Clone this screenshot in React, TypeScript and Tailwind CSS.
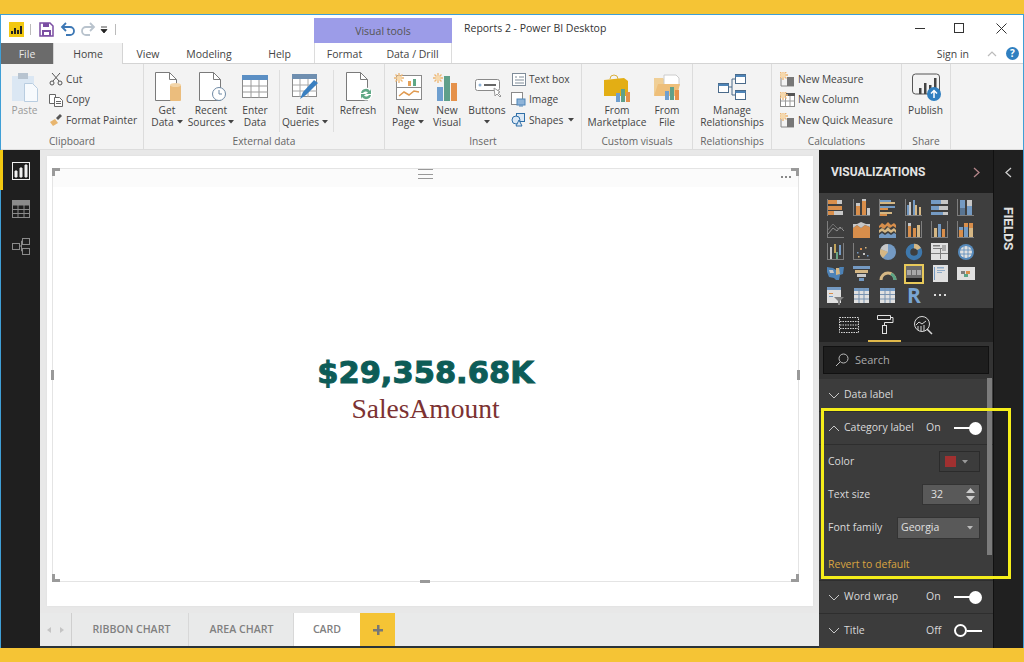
import React from "react";

const O = "#e9974d";
const B = "#7aa5d2";
const G = "#d6d6d6";
const T = "#e6c58c";
const A = "#858585";
const W = "#f2f2f2";

const r = (x: number, y: number, w: number, h: number, c: string) => <rect x={x} y={y} width={w} height={h} fill={c} />;

const Caret = ({ className = "fill-[#444]" }: { className?: string }) => (
  <svg width="6" height="4" viewBox="0 0 6 4" className={`inline-block ${className}`}><path d="M0 0h6L3 3.500z" /></svg>
);

const Axes = () => (
  <>
    {r(0, 0, 1, 17, A)}
    {r(0, 16, 17, 1, A)}
  </>
);

const tableIcon = (c: string) => (
  <>
    {r(1, 1, 15, 15, W)}
    {r(1, 1, 15, 3, B)}
    {r(5.500, 1, 1, 15, c)}
    {r(10.500, 1, 1, 15, c)}
    {r(1, 7, 15, 1, c)}
    {r(1, 11.500, 15, 1, c)}
  </>
);

const vizIcons = [
  <>{r(0, 0, 1, 17, A)}{r(1, 1, 9, 4, O)}{r(10, 1, 5, 4, G)}{r(1, 7, 14, 4, O)}{r(1, 12, 6, 4, O)}{r(7, 12, 9, 4, G)}</>,
  <><Axes />{r(3, 7, 4, 9, O)}{r(3, 4, 4, 3, G)}{r(9, 2, 4, 14, O)}{r(9, 0, 4, 2, G)}{r(14, 9, 3, 7, G)}</>,
  <>{r(0, 0, 1, 17, A)}{r(1, 1, 11, 2, B)}{r(1, 3, 15, 2, T)}{r(1, 7, 15, 2, B)}{r(1, 9, 8, 2, O)}{r(1, 13, 12, 2, T)}{r(1, 15, 7, 2, O)}</>,
  <><Axes />{r(2, 6, 2, 10, B)}{r(4, 3, 2, 13, G)}{r(8, 1, 2, 15, B)}{r(10, 6, 2, 10, T)}{r(14, 8, 2, 8, T)}</>,
  <>{r(0, 1, 17, 4, B)}{r(10, 1, 7, 4, G)}{r(0, 7, 17, 4, G)}{r(0, 7, 8, 4, B)}{r(0, 13, 17, 3, B)}{r(12, 13, 5, 3, G)}</>,
  <>{r(0, 0, 1, 17, A)}{r(3, 1, 5, 15, B)}{r(3, 9, 5, 7, "#5b7a9c")}{r(10, 1, 5, 15, G)}{r(10, 7, 5, 9, B)}{r(1, 16, 16, 1, A)}</>,
  <><Axes /><path d="M1 13l5-6 4 3 3-4 4 4" stroke="#9a9a9a" fill="none" /><path d="M1 9l5-6 5 5 5-1" stroke="#767676" fill="none" /></>,
  <><path d="M0 7l4-3 4 3 4-3 5 2v11H0z" fill={O} /><path d="M0 3l4 0 4-2 5 2 4 0v3l-5-2-4 3-4-3-4 3z" fill={G} /></>,
  <><path d="M0 5l3-3 3 2 3-3 3 3 3-2 2 2v3l-3-2-3 2-3-2-3 3-3-2-2 1z" fill={O} /><path d="M0 9l3-2 3 2 3-3 3 3 3-2 2 2v3l-2-2-3 2-3-2-3 2-3-2-3 2z" fill={T} /><path d="M0 14l3-2 3 2 3-2 3 2 3-2 2 1v4H0z" fill={B} /></>,
  <><Axes />{r(3, 5, 3, 11, O)}{r(3, 2, 3, 3, G)}{r(8, 7, 3, 9, O)}{r(12, 4, 3, 12, T)}{r(16, 0, 1, 17, A)}</>,
  <><Axes />{r(3, 7, 3, 9, T)}{r(7, 3, 3, 13, B)}{r(11, 8, 3, 8, O)}{r(16, 0, 1, 17, A)}</>,
  <><Axes />{r(2, 9, 4, 7, O)}{r(2, 6, 4, 3, B)}{r(7, 5, 4, 11, B)}{r(7, 2, 4, 4, O)}{r(12, 2, 4, 5, O)}{r(12, 7, 4, 9, T)}</>,
  <><Axes />{r(16, 0, 1, 17, A)}{r(3, 4, 2, 12, G)}{r(7, 1, 2, 9, "#d1b15f")}{r(9, 9, 2, 7, "#6fb08b")}{r(12, 2, 2, 10, B)}</>,
  <><Axes />{r(4, 9, 1.500, 1.500, B)}{r(7, 5, 2, 2, O)}{r(10, 10, 2, 2, G)}{r(12, 4, 1.500, 1.500, T)}{r(14, 12, 1.500, 1.500, B)}{r(5, 13, 1.500, 1.500, T)}</>,
  <><circle cx="9" cy="9" r="8" fill={B} /><path d="M9 9L9 1A8 8 0 0 0 1.500 6z" fill={G} /><path d="M9 9L1.500 6A8 8 0 0 0 4 15z" fill={T} /></>,
  <><circle cx="9" cy="9" r="6" fill="none" stroke="#3f7fb8" strokeWidth="4.500" /><path d="M9 3a6 6 0 0 1 5 3" fill="none" stroke={T} strokeWidth="4.500" /></>,
  <>{r(0, 0, 17, 17, W)}{r(2, 2, 7, 1.500, A)}{r(2, 5, 13, 1, A)}{r(9, 5, 1, 11, A)}{r(0, 10, 17, 1, A)}{r(11, 2, 4, 6, "#b8b8b8")}</>,
  <><circle cx="9" cy="9" r="8" fill="#5a93c9" /><circle cx="9" cy="9" r="6" fill={W} /><path d="M3 7h12M3 11h12M7 3v12M11 3v12" stroke="#5a93c9" strokeWidth="0.800" /></>,
  <><path d="M0 2l6 1 3 2 4-3 4 0-1 7-3 1-1 5-3 0-2-2-5-1-2-5z" fill="#4f8ac4" /><path d="M9 3l3 0 1 6-4 1z" fill={T} /><path d="M2 5l4 0 1 3-4 0z" fill={G} /></>,
  <>{r(0, 1, 17, 3, B)}{r(2, 5, 13, 3, T)}{r(4, 9, 9, 3, G)}{r(6, 13, 5, 3, B)}</>,
  <><path d="M2 15a7 7 0 0 1 14 0" fill="none" stroke={T} strokeWidth="3" /><path d="M12 9a7 7 0 0 1 4 6" fill="none" stroke="#5fb08e" strokeWidth="3" /></>,
  <></>,
  <>{r(2, 0, 15, 17, W)}{r(3, 2, 1, 13, B)}{r(6, 2, 7, 1.500, "#99b8d8")}{r(6, 5, 8, 1, "#99b8d8")}{r(6, 7, 5, 1, "#99b8d8")}</>,
  <>{r(0, 2, 18, 13, W)}{r(4, 6, 4, 3, A)}{r(9, 6, 4, 3, O)}{r(7, 9, 4, 3, "#5fb08e")}</>,
  <>{r(0, 0, 14, 16, W)}{r(0, 0, 14, 3, B)}{r(2, 6, 4, 1, O)}{r(2, 9, 4, 1, B)}<path d="M7 10h10l-4 4v4h-2v-4z" fill="#8a8a8a" /></>,
  tableIcon("#7f9cbc"),
  tableIcon("#7f9cbc"),
];

const VizGrid = () => (
  <div className="grid grid-cols-[repeat(6,26px)] auto-rows-[22px] pl-[4px] pt-[4px] h-[115px] bg-[#3e3e3e]">
    {vizIcons.map((icon, i) =>
      i === 21 ? (
        <div key={i} className="flex items-center justify-center">
          <div className="w-[20px] h-[20px] border-2 border-[#e8c95a] bg-[#6a6a6a] flex flex-col">
            <div className="flex-1 flex items-center justify-center gap-[1px]">
              <div className="w-[4px] h-[5px] bg-[#a8a8a8]" />
              <div className="w-[4px] h-[5px] bg-[#a8a8a8]" />
              <div className="w-[4px] h-[5px] bg-[#a8a8a8]" />
            </div>
            <div className="h-[4px] bg-[#222]" />
          </div>
        </div>
      ) : (
        <div key={i} className="flex items-center justify-center opacity-90">
          <svg width="18" height="18" viewBox="0 0 18 18">{icon}</svg>
        </div>
      )
    )}
    <div className="flex items-center justify-center text-[21px] font-bold text-[#7aa5d2] font-['Open_Sans',sans-serif]">R</div>
    <div className="flex items-center justify-center gap-[3px] pb-[3px]">
      <div className="w-[2px] h-[2px] bg-[#ddd]" />
      <div className="w-[2px] h-[2px] bg-[#ddd]" />
      <div className="w-[2px] h-[2px] bg-[#ddd]" />
    </div>
  </div>
);

const DocIcon = ({ children }: { children?: React.ReactNode }) => (
  <svg width="36" height="34" viewBox="0 0 36 34">
    <path d="M6.500 2.500h14l7 7v21h-21z" fill="#fff" stroke="#7a7a7a" />
    <path d="M20.500 2.500v7h7" fill="none" stroke="#7a7a7a" />
    {children}
  </svg>
);

const Sun = ({ x = 0, y = 0 }: { x?: number; y?: number }) => (
  <g transform={`translate(${x} ${y})`}>
    <path d="M5 0v10M0 5h10M1.500 1.500l7 7M8.500 1.500l-7 7" stroke="#edb572" strokeWidth="1.300" />
    <circle cx="5" cy="5" r="2.500" fill="#f6d9ad" />
  </g>
);

const BigBtn = ({ w, icon, lines, caret, className = "text-[#444]" }: { w: number; icon: React.ReactNode; lines: string[]; caret?: boolean; className?: string }) => (
  <div className={`flex flex-col items-center shrink-0 ${className}`} style={{ width: w }}>
    <div className="h-[34px] flex items-center justify-center">{icon}</div>
    {lines.map((l, i) => (
      <div key={i} className="h-[12px] leading-[12px] whitespace-nowrap flex items-center gap-[3px]">
        {l}
        {caret && i === lines.length - 1 ? <Caret /> : null}
      </div>
    ))}
  </div>
);

const SmallBtn = ({ icon, label, caret }: { icon: React.ReactNode; label: string; caret?: boolean }) => (
  <div className="h-[20.500px] flex items-center gap-[3px] whitespace-nowrap text-[#444]">
    <div className="w-[15px] h-[16px] flex items-center justify-center shrink-0">{icon}</div>
    {label}
    {caret ? <Caret className="fill-[#444] ml-[2px]" /> : null}
  </div>
);

const Group = ({ w, label, children }: { w: number; label: string; children: React.ReactNode }) => (
  <div className="flex flex-col h-[85px] border-r border-[#dcdcdc] shrink-0" style={{ width: w }}>
    <div className="h-[69px] pt-[6px] flex">{children}</div>
    <div className="flex-1 flex items-center justify-center text-[#666] leading-none">{label}</div>
  </div>
);

const VSep = () => <div className="w-px h-[62px] bg-[#dedede] shrink-0" />;

const Ribbon = () => (
  <div className="flex h-[85px] bg-[#f3f3f3] text-[10.200px] font-['Open_Sans',sans-serif]">
    <Group w={143} label="Clipboard">
      <div className="w-[47px] text-[#9a9a9a] shrink-0 flex flex-col items-center">
        <div className="h-[34px] flex items-center">
          <svg width="28" height="32" viewBox="0 0 28 32">
            <rect x="1" y="5" width="22" height="25" fill="#dbe7f3" />
            <rect x="7" y="2" width="10" height="6" fill="#b8c4d0" />
            <path d="M13.500 12.500h8l5 5v13h-13z" fill="#f7fafd" stroke="#b9cde0" />
          </svg>
        </div>
        <div className="leading-[12px]">Paste</div>
      </div>
      <div className="flex flex-col -mt-[1px]">
        <SmallBtn label="Cut" icon={<svg width="14" height="14" viewBox="0 0 14 14" fill="none" stroke="#555"><path d="M3 1l7 8M11 1L4 9" /><circle cx="3" cy="11" r="2" /><circle cx="11" cy="11" r="2" /></svg>} />
        <SmallBtn label="Copy" icon={<svg width="14" height="14" viewBox="0 0 14 14" fill="#fff" stroke="#666"><path d="M.500 1.500h6v9h-6z" /><path d="M5.500 4.500h5l3 3v6h-8z" /><path d="M7 8.500h5M7 10.500h5" /></svg>} />
        <SmallBtn label="Format Painter" icon={<svg width="14" height="14" viewBox="0 0 14 14"><path d="M1 9l5-3 3 4-5 3z" fill="#e8b56e" /><path d="M7 5l4-4 2 2-4 4z" fill="#555" /></svg>} />
      </div>
    </Group>
    <Group w={241} label="External data">
      <div className="w-px" />
      <BigBtn w={44} lines={["Get", "Data"]} caret icon={<DocIcon><rect x="21" y="15" width="11" height="16" rx="1" fill="#ebbd7d" /><ellipse cx="26.500" cy="15" rx="5.500" ry="2" fill="#f3d5a8" /></DocIcon>} />
      <BigBtn w={44} lines={["Recent", "Sources"]} caret icon={<DocIcon><circle cx="26" cy="24" r="6.500" fill="#fff" stroke="#6f8aa5" /><path d="M26 20v4h3" fill="none" stroke="#6f8aa5" /></DocIcon>} />
      <BigBtn w={44} lines={["Enter", "Data"]} icon={
        <svg width="28" height="26" viewBox="0 0 28 26"><rect x="1.500" y="1.500" width="25" height="22" fill="#fff" stroke="#8a8a8a" /><rect x="1" y="1" width="26" height="5" fill="#5b8fc4" /><path d="M10 6v18M18 6v18M2 12h25M2 18h25" stroke="#9a9a9a" /></svg>
      } />
      <div className="pl-[2px] flex"><VSep /></div>
      <BigBtn w={50} lines={["Edit", "Queries"]} caret icon={
        <svg width="30" height="30" viewBox="0 0 30 30"><rect x="2.500" y="2.500" width="24" height="22" fill="#fff" stroke="#8a8a8a" /><rect x="2" y="2" width="25" height="5" fill="#6f8fb0" /><path d="M10 7v18M18 7v18M3 13h24M3 19h24" stroke="#a8a8a8" /><path d="M10 27l3-7 11-12 4 3-12 12z" fill="#3a7fc0" /></svg>
      } />
      <div className="pl-[3px] flex"><VSep /></div>
      <BigBtn w={48} lines={["Refresh"]} icon={
        <DocIcon><circle cx="26" cy="24" r="6.500" fill="#fff" /><path d="M21 23a5 5 0 0 1 9-2l1-2v5h-5l2-1.500a3 3 0 0 0-5 .5zM31 25a5 5 0 0 1-9 2l-1 2v-5h5l-2 1.500a3 3 0 0 0 5-.5z" fill="#5fa886" /></DocIcon>
      } />
    </Group>
    <Group w={197} label="Insert">
      <div className="w-[3px]" />
      <BigBtn w={40} lines={["New", "Page"]} caret icon={
        <svg width="30" height="30" viewBox="0 0 30 30"><rect x="3.500" y="3.500" width="25" height="24" fill="#fff" stroke="#8a8a8a" /><path d="M4 15.500h24" stroke="#8a8a8a" /><rect x="15" y="9" width="3" height="5" fill="#e5a15a" /><rect x="20" y="7" width="3" height="7" fill="#5fa886" /><path d="M6 24l5-4 5 3 5-4 5 1" stroke="#e09a50" strokeWidth="1.500" fill="none" /><Sun x={1} y={1} /></svg>
      } />
      <BigBtn w={38} lines={["New", "Visual"]} icon={
        <svg width="28" height="30" viewBox="0 0 28 30"><rect x="4" y="15" width="6" height="14" fill="#6f9fcf" /><rect x="11" y="4" width="6" height="25" fill="#5fa08a" /><rect x="18" y="11" width="6" height="18" fill="#e5914a" /><Sun x={0} y={1} /></svg>
      } />
      <BigBtn w={42} lines={["Buttons", ""]} caret icon={
        <svg width="30" height="26" viewBox="0 0 30 26"><rect x="3.500" y="5.500" width="24" height="11" rx="2" fill="#fff" stroke="#8a8a8a" /><circle cx="8" cy="11" r="1.500" fill="#8fb4d8" /><path d="M12 11h12" stroke="#666" strokeWidth="2" /><path d="M22 14l1 8 2-2 3 3 1-1-3-3 2-1z" fill="#fff" stroke="#999" /></svg>
      } />
      <div className="flex flex-col ml-[3px] -mt-[1px]">
        <SmallBtn label="Text box" icon={<svg width="14" height="13" viewBox="0 0 14 13" fill="#fff" stroke="#7f8c99"><rect x=".500" y=".500" width="13" height="12" /><path d="M3 4h2M7 4h5M3 7h9M3 10h9" /></svg>} />
        <SmallBtn label="Image" icon={<svg width="15" height="15" viewBox="0 0 15 15"><rect x=".500" y=".500" width="11" height="12" fill="#fff" stroke="#8a8a8a" /><rect x="6" y="7" width="8" height="6" fill="#8fb4d8" stroke="#4f85b8" /><path d="M8 14h4" stroke="#4f85b8" /></svg>} />
        <SmallBtn label="Shapes" caret icon={<svg width="15" height="14" viewBox="0 0 15 14" fill="#dbe8f5" stroke="#2f6fa8"><rect x="5.500" y=".500" width="8" height="8" /><circle cx="5" cy="7" r="4" /><path d="M8 7l3 6H5z" /></svg>} />
      </div>
    </Group>
    <Group w={111} label="Custom visuals">
      <div className="w-[5px]" />
      <BigBtn w={60} lines={["From", "Marketplace"]} icon={
        <svg width="32" height="32" viewBox="0 0 32 32"><path d="M9 8a4 4 0 0 1 8 0" fill="none" stroke="#d9b040" /><path d="M3 9l20-2 4 3v15H3z" fill="#e3ae14" /><rect x="15" y="22" width="4" height="9" fill="#6f9fcf" /><rect x="20" y="18" width="4" height="13" fill="#5fa08a" /><rect x="25" y="21" width="4" height="10" fill="#e5914a" /></svg>
      } />
      <BigBtn w={40} lines={["From", "File"]} icon={
        <svg width="30" height="30" viewBox="0 0 30 30"><path d="M2 6h9l3 3h12v14H2z" fill="#f0cf96" /><path d="M12 3h12l3 3v8H12z" fill="#fff" stroke="#ccc" /><path d="M2 24l4-12h22l-3 12z" fill="#eebf7a" /><rect x="13" y="19" width="4" height="9" fill="#6f9fcf" /><rect x="18" y="15" width="4" height="13" fill="#5fa08a" /><rect x="23" y="18" width="4" height="10" fill="#e5914a" /></svg>
      } />
    </Group>
    <Group w={79} label="Relationships">
      <BigBtn w={78} lines={["Manage", "Relationships"]} icon={
        <svg width="30" height="30" viewBox="0 0 30 30" fill="#fff" stroke="#4a6a8a"><path d="M10 15h5M15 7v16M15 7h3M15 23h3" /><rect x="1.500" y="11.500" width="10" height="9" /><rect x="18.500" y="2.500" width="10" height="9" /><rect x="18.500" y="18.500" width="10" height="9" /><path d="M1.500 13h10M18.500 4h10M18.500 20h10" stroke="#4f85b8" strokeWidth="2" /></svg>
      } />
    </Group>
    <Group w={130} label="Calculations">
      <div className="flex flex-col pl-[8px] -mt-[1px]">
        <SmallBtn label="New Measure" icon={<svg width="15" height="15" viewBox="0 0 15 15"><path d="M1 6v8h13" fill="none" stroke="#888" /><rect x="7" y="5" width="7" height="9" fill="#777" /><Sun x={-2} y={-2} /></svg>} />
        <SmallBtn label="New Column" icon={<svg width="15" height="15" viewBox="0 0 15 15"><rect x=".500" y="3.500" width="14" height="11" fill="#fff" stroke="#888" /><rect x="6" y="1" width="9" height="3" fill="#555" /><path d="M5.500 4v10M10 4v10M1 9h13" stroke="#999" /><Sun x={-2} y={-2} /></svg>} />
        <SmallBtn label="New Quick Measure" icon={<svg width="15" height="15" viewBox="0 0 15 15"><path d="M1 6v8h13" fill="none" stroke="#888" /><rect x="7" y="5" width="7" height="9" fill="#777" /><Sun x={-2} y={-2} /></svg>} />
      </div>
    </Group>
    <Group w={49} label="Share">
      <BigBtn w={47} lines={["Publish"]} icon={
        <svg width="32" height="30" viewBox="0 0 32 30"><rect x="2.500" y="2" width="27" height="20" rx="3" fill="none" stroke="#555" /><rect x="9" y="16" width="2.500" height="6" fill="#444" /><rect x="14" y="11" width="2.500" height="11" fill="#444" /><rect x="19" y="13" width="2.500" height="9" fill="#444" /><rect x="24" y="6" width="2.500" height="16" fill="#444" /><circle cx="24" cy="22" r="7" fill="#2f7fc0" /><path d="M24 26v-7M21 21.500l3-3 3 3" stroke="#fff" strokeWidth="1.500" fill="none" /></svg>
      } />
    </Group>
  </div>
);

const TitleBar = () => (
  <div className="flex h-[28px] bg-white pt-[3px] font-['Open_Sans',sans-serif] text-[10.500px] text-[#444]">
    <div className="w-[313px] flex items-center shrink-0 pb-[3px]">
      <div className="w-[15px] h-[15px] ml-[8px] bg-[#f2c811] flex items-end justify-center gap-[1px] pb-[3px]">
        <div className="w-[2px] h-[3px] bg-[#222]" />
        <div className="w-[2px] h-[6px] bg-[#222]" />
        <div className="w-[2px] h-[4px] bg-[#222]" />
        <div className="w-[2px] h-[8px] bg-[#222]" />
      </div>
      <div className="w-px h-[11px] bg-[#bbb] ml-[6px]" />
      <svg width="15" height="15" viewBox="0 0 15 15" className="ml-[8px]"><path d="M1 1h10l3 3v10H1z" fill="none" stroke="#7b4ea3" strokeWidth="1.500" /><path d="M4 1h6v4H4zM3 8h9v6H3z" fill="#7b4ea3" /><rect x="5" y="10" width="5" height="3" fill="#fff" /></svg>
      <svg width="16" height="14" viewBox="0 0 16 14" className="ml-[6px]" fill="none" stroke="#3d78b5" strokeWidth="1.800"><path d="M2 5h8a4 4 0 0 1 0 8H6" /><path d="M6 1L2 5l4 4" /></svg>
      <svg width="16" height="14" viewBox="0 0 16 14" className="ml-[4px]" fill="none" stroke="#b9c3cd" strokeWidth="1.800"><path d="M14 5H6a4 4 0 0 0 0 8h4" /><path d="M10 1l4 4-4 4" /></svg>
      <svg width="8" height="8" viewBox="0 0 8 8" className="ml-[4px] mt-[2px]"><path d="M1 1h6M1 3.500h6L4 7z" stroke="#222" fill="#222" strokeWidth="0.800" /></svg>
      <div className="w-px h-[11px] bg-[#bbb] ml-[7px]" />
    </div>
    <div className="w-[138px] h-[25px] shrink-0 bg-[#9c9ce8] flex items-center justify-center text-[#555] pt-[2px]">Visual tools</div>
    <div className="pl-[12px] pt-[3px] text-[#333]">Reports 2 - Power BI Desktop</div>
    <div className="ml-auto flex h-[20px] items-center text-[#333]">
      <div className="w-[41px] flex justify-center"><div className="w-[10px] h-px bg-[#333]" /></div>
      <div className="w-[42px] flex justify-center pr-[4px]"><div className="w-[10px] h-[10px] border border-[#333]" /></div>
      <div className="w-[41px] flex justify-center pr-[2px]">
        <svg width="11" height="11" viewBox="0 0 11 11" stroke="#333"><path d="M.500.500l10 10M10.500.500l-10 10" /></svg>
      </div>
    </div>
  </div>
);

const TabRow = () => (
  <div className="flex h-[21px] bg-white border-b border-[#d4d4d4] font-['Open_Sans',sans-serif] text-[10.500px] text-[#444] leading-[22px] text-center">
    <div className="w-[52px] h-[21px] bg-[#6b6b6b] text-[#e8e8e8]">File</div>
    <div className="w-[70px] h-[21px] bg-[#f3f3f3] border-x border-[#d4d4d4] relative z-10">Home</div>
    <div className="w-[50px]">View</div>
    <div className="w-[72px]">Modeling</div>
    <div className="w-[69px]">Help</div>
    <div className="w-[60px] border-l border-[#dcdcdc]">Format</div>
    <div className="w-[78px] border-r border-[#dcdcdc]">Data / Drill</div>
    <div className="ml-auto flex items-center pr-[4px] pt-[1px]">
      <span>Sign in</span>
      <svg width="10" height="6" viewBox="0 0 10 6" fill="none" stroke="#bbb" strokeWidth="1.200" className="ml-[18px]"><path d="M1 5l4-4 4 4" /></svg>
      <div className="w-[13px] h-[13px] rounded-full bg-[#2f7fc0] text-white text-[10px] font-bold leading-[13px] ml-[9px]">?</div>
    </div>
  </div>
);

const Corner = ({ className }: { className: string }) => <div className={`absolute w-[8px] h-[8px] border-[#9a9a9a] ${className}`} />;

const Canvas = () => (
  <div className="w-[779px] shrink-0 flex flex-col bg-[#e8e8e8]">
    <div className="flex-1 pt-[6px] pl-[7px] pr-[6px] pb-[7px]">
      <div className="relative h-full bg-white pt-[12px] pl-[5px] pr-[14px] pb-[24px] shadow-[0_0_2px_#ddd]">
        <div className="relative h-full border border-[#e4e4e4] flex flex-col items-center justify-center pt-[29px]">
          <div className="absolute inset-x-0 top-0 h-[18px] bg-[#fbfbfb]" />
          <Corner className="-top-px -left-px border-t-[3px] border-l-[3px]" />
          <Corner className="-top-px -right-px border-t-[3px] border-r-[3px]" />
          <Corner className="-bottom-px -left-px border-b-[3px] border-l-[3px]" />
          <Corner className="-bottom-px -right-px border-b-[3px] border-r-[3px]" />
          <div className="absolute top-0 left-[365px] w-[15px] h-[10px] border-y border-[#999] flex items-center"><div className="w-full h-px bg-[#999]" /></div>
          <div className="absolute top-[7px] right-[7px] flex gap-[2px]">
            <div className="w-[2px] h-[2px] bg-[#888]" />
            <div className="w-[2px] h-[2px] bg-[#888]" />
            <div className="w-[2px] h-[2px] bg-[#888]" />
          </div>
          <div className="absolute -left-[2px] top-[201px] w-[3px] h-[10px] bg-[#999]" />
          <div className="absolute -right-[2px] top-[201px] w-[3px] h-[10px] bg-[#999]" />
          <div className="absolute -bottom-[2px] left-[367px] w-[10px] h-[3px] bg-[#999]" />
          <div className="font-['DejaVu_Sans',sans-serif] font-bold text-[30.500px] leading-[38px] text-[#0d5c57] [-webkit-text-stroke:1px_#0d5c57]">$29,358.68K</div>
          <div className="font-['Liberation_Serif',serif] text-[27.500px] leading-[33px] text-[#7c3232]">SalesAmount</div>
        </div>
      </div>
    </div>
    <div className="h-[33px] flex bg-[#e9eaea] font-['Open_Sans',sans-serif] text-[10.600px] font-semibold text-[#808080] leading-[32px] text-center">
      <div className="w-[32px] border-r border-[#cfcfcf] flex items-center justify-center gap-[9px]">
        <svg width="4" height="6" viewBox="0 0 4 6" fill="#c4c4c4"><path d="M4 0v6L0 3z" /></svg>
        <svg width="4" height="6" viewBox="0 0 4 6" fill="#c4c4c4"><path d="M0 0v6l4-3z" /></svg>
      </div>
      <div className="w-[117px] border-r border-[#d8d8d8] pl-[3px]">RIBBON CHART</div>
      <div className="w-[105px] border-r border-[#d8d8d8] pl-[1px]">AREA CHART</div>
      <div className="w-[66px] bg-white">CARD</div>
      <div className="w-[35px] bg-[#f5c435] flex items-center justify-center">
        <svg width="10" height="10" viewBox="0 0 10 10" fill="#777"><path d="M4 0h2.500v4H10v2.500H6.500V10H4V6.500H0V4h4z" /></svg>
      </div>
    </div>
    <div className="h-[2px] bg-[#2a3338]" />
  </div>
);

const Chevron = ({ up }: { up?: boolean }) => (
  <svg width="12" height="7" viewBox="0 0 12 7" fill="none" stroke="#c8c8c8" className="shrink-0">
    <path d={up ? "M1 6l5-5 5 5" : "M1 1l5 5 5-5"} />
  </svg>
);

const Toggle = ({ on }: { on: boolean }) =>
  on ? (
    <div className="w-[29px] flex items-center">
      <div className="w-[16px] h-[2px] bg-white" />
      <div className="w-[13px] h-[13px] rounded-full bg-white -ml-[1px]" />
    </div>
  ) : (
    <div className="w-[29px] flex items-center">
      <div className="w-[13px] h-[13px] rounded-full border-2 border-white" />
      <div className="w-[15px] h-[2px] bg-white" />
    </div>
  );

const Section = ({ label, state, up, h, sep = true }: { label: string; state?: boolean; up?: boolean; h: string; sep?: boolean }) => (
  <div className={`flex items-center pl-[9px] ${h} ${sep ? "border-b border-[#2e2e2e]" : ""}`}>
    <Chevron up={up} />
    <span className="ml-[4px] w-[82px] whitespace-nowrap">{label}</span>
    {state !== undefined ? (
      <>
        <span className="w-[28px]">{state ? "On" : "Off"}</span>
        <Toggle on={state} />
      </>
    ) : null}
  </div>
);

const Fieldrow = ({ label, children }: { label: string; children: React.ReactNode }) => (
  <div className="h-[33px] flex items-center pl-[9px] pr-[13px] justify-between">
    <span>{label}</span>
    {children}
  </div>
);

const VizPanel = () => (
  <div className="w-[174px] shrink-0 relative flex flex-col bg-[#1f1f1f] font-['Open_Sans',sans-serif] text-[10.500px] text-[#d9d9d9]">
    <div className="h-[43px] flex items-center justify-between pl-[12px] pr-[13px] pt-[1px] shrink-0">
      <span className="text-[12px] text-[#e4e4e4] font-['Roboto',sans-serif] font-bold">VISUALIZATIONS</span>
      <svg width="7" height="11" viewBox="0 0 7 11" fill="none" stroke="#b5868a" strokeWidth="1.300"><path d="M1 1l5 4.500L1 10" /></svg>
    </div>
    <VizGrid />
    <div className="h-[34px] flex items-start pl-[16px] bg-[#232323] shrink-0">
      <div className="w-[33px] h-[34px] flex items-center justify-center pr-[6px]">
        <svg width="20" height="16" viewBox="0 0 20 16" fill="none" stroke="#d8d8d8" strokeDasharray="1.500 1"><rect x=".500" y=".500" width="19" height="15" /><path d="M1 4.500h18M1 8h18M1 11.500h18" /></svg>
      </div>
      <div className="w-[33px] h-[34px] border-b-2 border-[#e0b84a] flex items-center justify-center">
        <svg width="18" height="20" viewBox="0 0 18 20" fill="none" stroke="#e0e0e0"><path d="M1.500 1.500h13v4h-13zM14.500 3.500h2.500v5H8.500v3" /><rect x="6.500" y="11.500" width="4" height="8" /></svg>
      </div>
      <div className="w-[44px] h-[34px] flex items-center justify-center">
        <svg width="20" height="20" viewBox="0 0 20 20" fill="none" stroke="#d8d8d8"><circle cx="9" cy="9" r="7.500" /><path d="M14 14l5 5" strokeWidth="1.500" /><path d="M3 10l3-3 3 2 4-3M5 11v4M8 11v5M11 10v6" /></svg>
      </div>
    </div>
    <div className="h-[37px] bg-[#333] px-[4px] pt-[4px] shrink-0">
      <div className="h-[28px] bg-[#1e1e1e] border border-[#111] flex items-center pl-[11px] text-[#aaa] text-[11px]">
        <svg width="14" height="14" viewBox="0 0 14 14" fill="none" stroke="#bbb" className="mr-[6px]"><circle cx="8.500" cy="5.500" r="4.500" /><path d="M5 9l-4 4" /></svg>
        Search
      </div>
    </div>
    <div className="flex-1 bg-[#3c3c3c]">
      <Section label="Data label" h="h-[33px]" />
      <Section label="Category label" state up h="h-[33px]" />
      <Fieldrow label="Color">
        <div className="w-[41px] h-[21px] border border-[#2b2b2b] flex items-center pl-[5px] gap-[6px]">
          <div className="w-[11px] h-[11px] bg-[#a03030]" />
          <Caret className="fill-[#999]" />
        </div>
      </Fieldrow>
      <Fieldrow label="Text size">
        <div className="w-[58px] h-[21px] bg-[#595959] border border-[#333] flex items-center pl-[8px] justify-between pr-[4px] text-[#e0e0e0]">
          32
          <svg width="9" height="13" viewBox="0 0 9 13" fill="#ccc"><path d="M4.500 0L9 5H0zM0 8h9l-4.500 5z" /></svg>
        </div>
      </Fieldrow>
      <Fieldrow label="Font family">
        <div className="w-[83px] h-[22px] bg-[#595959] border border-[#333] flex items-center pl-[3px] justify-between pr-[6px] text-[#e0e0e0]">
          Georgia
          <Caret className="fill-[#bbb]" />
        </div>
      </Fieldrow>
      <div className="h-[37px] pl-[9px] flex items-center pt-[5px] border-b border-[#2e2e2e] text-[#d9a441]">Revert to default</div>
      <Section label="Word wrap" state h="h-[33px]" />
      <Section label="Title" state={false} h="h-[33px]" sep={false} />
    </div>
    <div className="absolute left-[168px] top-[228px] w-[5px] h-[177px] bg-[#7c7c7c]" />
  </div>
);

const App = () => (
  <div className="relative w-[1024px] h-[662px] overflow-hidden bg-[#f5c435]">
    <div className="h-[14px]" />
    <div className="h-[634px] border-x border-t border-[#3f9fd6] flex flex-col bg-white">
      <TitleBar />
      <TabRow />
      <Ribbon />
      <div className="h-px bg-[#dcdcdc]" />
      <div className="flex flex-1 min-h-0">
        <div className="w-[39px] shrink-0 bg-[#1f1f1f] relative flex flex-col items-center pt-[12px] gap-[20px]">
          <div className="absolute -left-[1px] top-0 w-[3px] h-[40px] bg-[#f2c811]" />
          <svg width="18" height="18" viewBox="0 0 18 18" fill="none" stroke="#f0f0f0"><rect x=".500" y=".500" width="17" height="17" /><path d="M3 15V9h2v6zM8 15V6h2v9zM13 15V3h2v12z" fill="#f0f0f0" /></svg>
          <svg width="18" height="18" viewBox="0 0 18 18" fill="none" stroke="#8a8a8a"><rect x=".500" y=".500" width="17" height="17" /><rect x="0" y="0" width="18" height="5" fill="#8a8a8a" /><path d="M6 5v13M12 5v13M1 9.500h17M1 13.500h17" /></svg>
          <svg width="18" height="17" viewBox="0 0 18 17" fill="none" stroke="#8a8a8a"><rect x=".500" y="5.500" width="7" height="6" /><rect x="10.500" y=".500" width="7" height="6" /><rect x="10.500" y="10.500" width="7" height="6" /><path d="M8 8h1.500v-5h1M9.500 8v5h1" /></svg>
        </div>
        <Canvas />
        <VizPanel />
        <div className="flex-1 bg-[#202020] border-l border-[#111] flex flex-col items-center pt-[17px] text-[#e0e0e0]">
          <svg width="7" height="11" viewBox="0 0 7 11" fill="none" stroke="#cfcfcf" strokeWidth="1.300"><path d="M6 1L1 5.500 6 10" /></svg>
          <div className="mt-[29px] font-['Roboto',sans-serif] font-bold text-[13.500px] leading-none [writing-mode:vertical-rl]">FIELDS</div>
        </div>
      </div>
    </div>
    <div className="absolute left-[821px] top-[408px] w-[190px] h-[171px] border-[3px] border-[#f5ee1a]" />
  </div>
);

export default App;
